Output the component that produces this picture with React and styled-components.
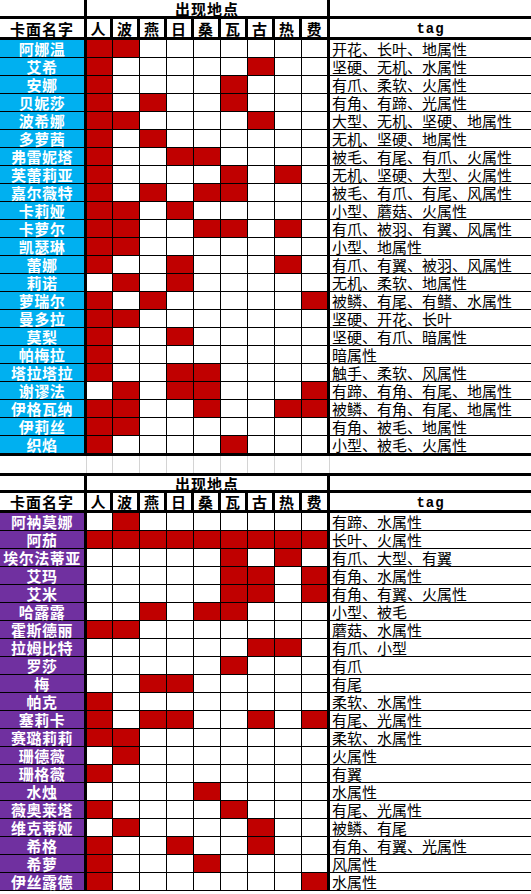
import React from "react";
import styled, { createGlobalStyle, css } from "styled-components";

const GlobalStyle = createGlobalStyle`
  html, body {
    margin: 0;
    padding: 0;
    background: #ffffff;
  }
  body {
    font-family: "Noto Sans CJK SC", "Noto Sans", sans-serif;
  }
`;

const PLACES = ["人", "波", "燕", "日", "桑", "瓦", "古", "热", "费"];
const COLUMNS = "87px 26px repeat(7, 27px) 28px 1fr";

const firstCards = [
  ["阿娜温", "110000000", "开花、长叶、地属性"],
  ["艾希", "100000100", "坚硬、无机、水属性"],
  ["安娜", "100001000", "有爪、柔软、火属性"],
  ["贝妮莎", "101001000", "有角、有蹄、光属性"],
  ["波希娜", "110000100", "大型、无机、坚硬、地属性"],
  ["多萝茜", "101000000", "无机、坚硬、地属性"],
  ["弗雷妮塔", "100110000", "被毛、有尾、有爪、火属性"],
  ["芙蕾莉亚", "100001010", "无机、坚硬、大型、火属性"],
  ["嘉尔薇特", "101011000", "被毛、有爪、有尾、风属性"],
  ["卡莉娅", "110100000", "小型、蘑菇、火属性"],
  ["卡萝尔", "110011010", "有爪、被羽、有翼、风属性"],
  ["凯瑟琳", "110000000", "小型、地属性"],
  ["蕾娜", "100100010", "有爪、有翼、被羽、风属性"],
  ["莉诺", "010100000", "无机、柔软、地属性"],
  ["萝瑞尔", "101000001", "被鳞、有尾、有鳍、水属性"],
  ["曼多拉", "110000000", "坚硬、开花、长叶"],
  ["莫梨", "100100000", "坚硬、有爪、暗属性"],
  ["帕梅拉", "100000000", "暗属性"],
  ["塔拉塔拉", "100110000", "触手、柔软、风属性"],
  ["谢谬法", "010110001", "有蹄、有角、有尾、地属性"],
  ["伊格瓦纳", "110010011", "被鳞、有角、有尾、地属性"],
  ["伊莉丝", "110000000", "有角、被毛、地属性"],
  ["织焰", "100001000", "小型、被毛、火属性"],
];

const secondCards = [
  ["阿衲莫娜", "010000000", "有蹄、水属性"],
  ["阿茄", "111111111", "长叶、火属性"],
  ["埃尔法蒂亚", "000001010", "有爪、大型、有翼"],
  ["艾玛", "000001101", "有角、水属性"],
  ["艾米", "000001101", "有角、有翼、火属性"],
  ["哈露露", "001011000", "小型、被毛"],
  ["霍斯德丽", "110000000", "蘑菇、水属性"],
  ["拉姆比特", "000000110", "有爪、小型"],
  ["罗莎", "000001000", "有爪"],
  ["梅", "001100000", "有尾"],
  ["帕克", "100000000", "柔软、水属性"],
  ["塞莉卡", "101100101", "有尾、光属性"],
  ["赛璐莉莉", "110000000", "柔软、水属性"],
  ["珊德薇", "010000000", "火属性"],
  ["珊格薇", "100000000", "有翼"],
  ["水烛", "000010000", "水属性"],
  ["薇奥莱塔", "100001000", "有尾、光属性"],
  ["维克蒂娅", "010000100", "被鳞、有尾"],
  ["希格", "100100100", "有角、有翼、光属性"],
  ["希萝", "100010000", "风属性"],
  ["伊丝露德", "100000001", "水属性"],
];

const Sheet = styled.div`
  width: 531px;
  display: flex;
  flex-direction: column;
`;

const Grid = styled.div`
  display: grid;
  grid-template-columns: ${COLUMNS};
`;

const cellBase = css`
  box-sizing: border-box;
  display: flex;
  align-items: center;
  white-space: nowrap;
  border-color: #000000;
  border-style: solid;
  border-width: 0;
`;

const HeadCell = styled.div`
  ${cellBase}
  justify-content: center;
  height: ${(p) => p.$height}px;
  border-top-width: ${(p) => (p.$top ? 3 : 0)}px;
  border-bottom-width: 3px;
  border-right-width: ${(p) => (p.$noRight ? 0 : 3)}px;
  grid-column: ${(p) => (p.$span ? `span ${p.$span}` : "auto")};
  font-size: 15px;
  font-weight: 700;
  letter-spacing: 1px;
  color: #000000;
  line-height: 1;
`;

const TagTitle = styled.span`
  font-family: "Liberation Mono", "DejaVu Sans Mono", monospace;
  font-size: 14px;
  font-weight: 700;
  letter-spacing: 1px;
  padding-top: 2px;
`;

const NameCell = styled.div`
  ${cellBase}
  justify-content: center;
  height: ${(p) => (p.$last ? 20 : 18)}px;
  border-right-width: 3px;
  border-bottom-width: ${(p) => (p.$last ? 3 : 1)}px;
  background: ${(p) => p.$bg};
  color: #ffffff;
  font-size: 15px;
  font-weight: 700;
  letter-spacing: 0.5px;
  line-height: 1;
`;

const MarkCell = styled.div`
  ${cellBase}
  height: ${(p) => (p.$last ? 20 : 18)}px;
  border-right-width: ${(p) => (p.$edge ? 3 : 1)}px;
  border-bottom-width: ${(p) => (p.$last ? 3 : 1)}px;
  background: ${(p) => (p.$on ? "#c00000" : "#ffffff")};
`;

const TagCell = styled.div`
  ${cellBase}
  height: ${(p) => (p.$last ? 20 : 18)}px;
  border-bottom-width: ${(p) => (p.$last ? 3 : 1)}px;
  padding-left: 2px;
  font-size: 15px;
  color: #000000;
  line-height: 1;
`;

const SpacerCell = styled.div`
  box-sizing: border-box;
  height: 17px;
  border-right: ${(p) => (p.$line ? "1px solid #d4d4d4" : "none")};
`;

function CardTable({ cards, nameColor, topBorder, closeBottom }) {
  const titleHeight = topBorder ? 20 : 19;
  const subHeight = topBorder ? 20 : 21;
  return (
    <Grid>
      <HeadCell $height={titleHeight} $top={topBorder} />
      <HeadCell $height={titleHeight} $top={topBorder} $span={9}>
        出现地点
      </HeadCell>
      <HeadCell $height={titleHeight} $top={topBorder} $noRight />

      <HeadCell $height={subHeight}>卡面名字</HeadCell>
      {PLACES.map((place) => (
        <HeadCell key={place} $height={subHeight}>
          {place}
        </HeadCell>
      ))}
      <HeadCell $height={subHeight} $noRight>
        <TagTitle>tag</TagTitle>
      </HeadCell>

      {cards.map(([name, marks, tags], i) => {
        const last = closeBottom && i === cards.length - 1;
        return (
          <React.Fragment key={name}>
            <NameCell $bg={nameColor} $last={last}>
              {name}
            </NameCell>
            {marks.split("").map((m, j) => (
              <MarkCell
                key={j}
                $on={m === "1"}
                $edge={j === PLACES.length - 1}
                $last={last}
              />
            ))}
            <TagCell $last={last}>{tags}</TagCell>
          </React.Fragment>
        );
      })}
    </Grid>
  );
}

function SpacerRow() {
  return (
    <Grid>
      <SpacerCell $line />
      {PLACES.map((place) => (
        <SpacerCell key={place} $line />
      ))}
      <SpacerCell />
    </Grid>
  );
}

export default function App() {
  return (
    <>
      <GlobalStyle />
      <Sheet>
        <CardTable cards={firstCards} nameColor="#00b0f0" closeBottom />
        <SpacerRow />
        <CardTable cards={secondCards} nameColor="#7030a0" topBorder />
      </Sheet>
    </>
  );
}
